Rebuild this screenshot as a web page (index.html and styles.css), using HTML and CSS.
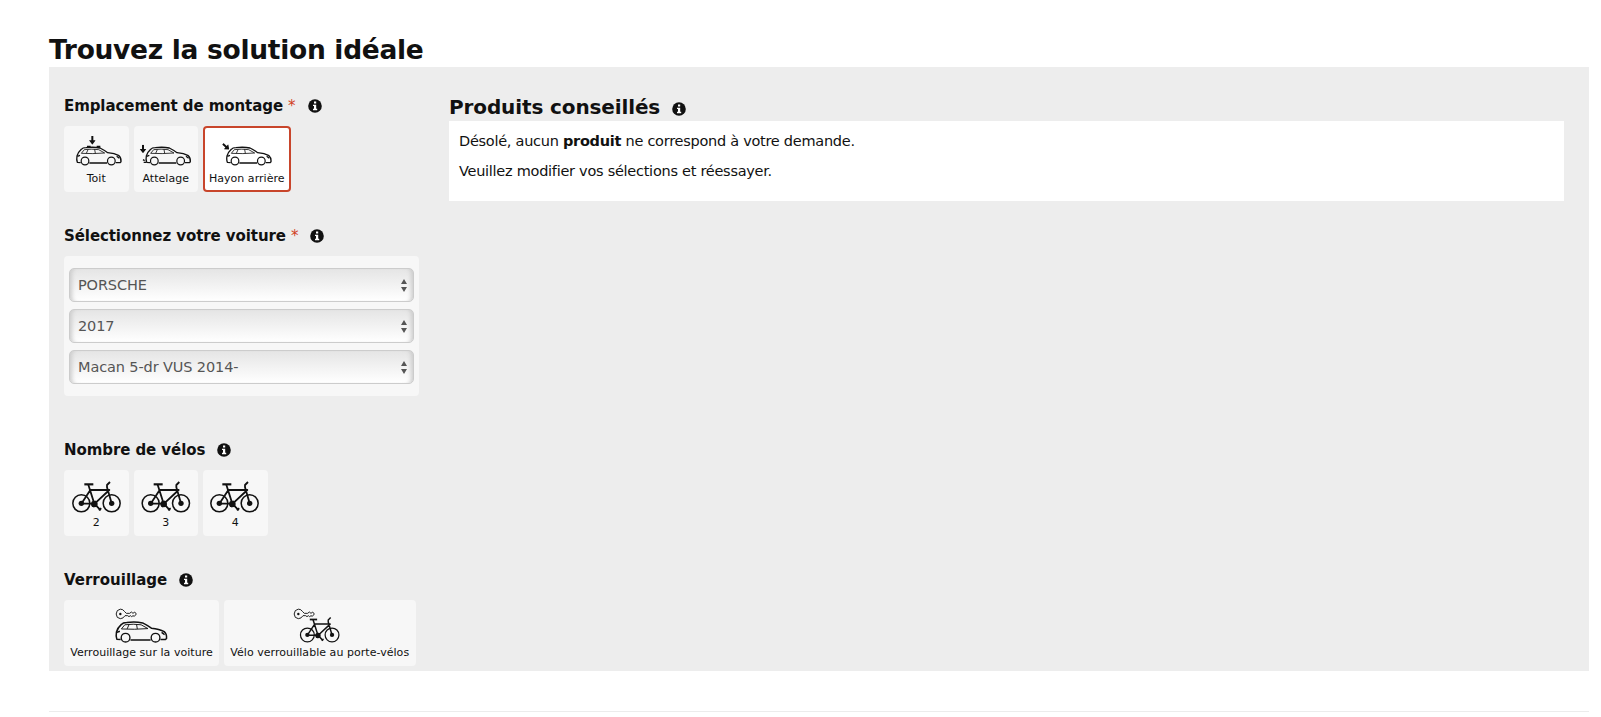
FILE: index.html
```html
<!DOCTYPE html>
<html lang="fr">
<head>
    <meta charset="UTF-8">
    <meta name="viewport" content="width=device-width, initial-scale=1.0">
    <title>Trouvez la solution idéale</title>
    <link rel="stylesheet" href="styles.css">
</head>
<body>
    <!-- Shared icon shapes -->
    <svg class="sprite" aria-hidden="true">
        <symbol id="info" viewBox="0 0 14 14">
            <circle cx="7" cy="7" r="6.8" fill="#111"/>
            <path d="M6 2.5h2.2v2H6zM5 5.7h3.2v4h1v1.5H5V9.7h1V7.1H5z" fill="#fff"/>
        </symbol>
        <symbol id="car" viewBox="0 0 138 58" overflow="visible">
            <g fill="none" stroke="#111" stroke-width="4" stroke-linejoin="round">
                <path d="M14 49L4 48Q1 40 3 29Q6 18 16 9Q20 4 30 4Q52 1 72 5Q84 11 95 19Q116 21 129 28Q136 34 135 46L132 49H119M40 50H93"/>
                <circle cx="27" cy="44" r="11.5" stroke-width="3.6"/>
                <circle cx="106" cy="44" r="11.5" stroke-width="3.6"/>
                <path d="M16 21L25 10Q48 7 68 10L86 20Q50 23 16 21M36 10L31 21M56 9L58 21" stroke-width="2.5"/>
                <path d="M4 30L12 27M122 30L130 36M125 33H129" stroke-width="4"/>
            </g>
        </symbol>
        <symbol id="bike" viewBox="0 0 148 96" overflow="visible">
            <g fill="none" stroke="#111" stroke-width="5.4" stroke-linejoin="round">
                <circle cx="28" cy="65" r="25.5" stroke-width="4.6"/>
                <circle cx="119" cy="65" r="25.5" stroke-width="4.6"/>
                <path d="M37 8H64" stroke-width="6.5"/>
                <path d="M49 9L67 66H28L55 25H112L68 66M119 65L105 17V10L114 1M67 66L86 86M80 85L88 80M62 76L72 58"/>
            </g>
            <circle cx="28" cy="65" r="8" fill="#111"/>
            <circle cx="119" cy="65" r="8" fill="#111"/>
            <circle cx="67" cy="67" r="10" fill="#111"/>
        </symbol>
        <symbol id="key" viewBox="0 0 64 32" overflow="visible">
            <path d="M27 9Q22 1 14 1.500Q2 3 1.500 16Q2 29 14 30Q23 30 28 21H36L40 24L44 21L48 24L52 21L56 23L62 16L57 10L52 14L47 10L42 14H32Z" fill="none" stroke="#111" stroke-width="2.8" stroke-linejoin="round"/>
            <circle cx="14" cy="16" r="3.6" fill="#111"/>
        </symbol>
        <symbol id="arrow" viewBox="0 0 20 26">
            <path d="M7 0h6v13h7L10 26L0 13h7z" fill="#111"/>
        </symbol>
    </svg>

    <h1>Trouvez la solution idéale</h1>

    <div class="configurator">
        <div class="filters">
            <div class="filter">
                <h3><span class="label">Emplacement de montage</span> <span class="required">*</span><svg class="info"><use href="#info"/></svg></h3>
                <div class="options">
                    <button class="option">
                        <svg class="icon" viewBox="0 0 192 132">
                            <use href="#arrow" x="75" y="30" width="20" height="26"/>
                            <path d="M69 62h11M98 62h11" stroke="#111" stroke-width="6"/>
                            <use href="#car" x="36" y="61" width="138" height="58"/>
                        </svg>
                        <span>Toit</span>
                    </button>
                    <button class="option">
                        <svg class="icon" viewBox="0 0 192 132">
                            <use href="#arrow" x="17" y="56" width="20" height="26"/>
                            <use href="#car" x="34" y="61" width="138" height="58"/>
                            <path d="M27 101l5 3M29 109h7" stroke="#111" stroke-width="4"/>
                        </svg>
                        <span>Attelage</span>
                    </button>
                    <button class="option selected">
                        <svg class="icon" viewBox="0 0 192 132">
                            <use href="#arrow" x="-10" y="-25" width="20" height="26" transform="translate(42 70) rotate(-48)"/>
                            <use href="#car" x="33" y="61" width="138" height="58"/>
                        </svg>
                        <span>Hayon arrière</span>
                    </button>
                </div>
            </div>

            <div class="filter">
                <h3><span class="label">Sélectionnez votre voiture</span> <span class="required">*</span><svg class="info"><use href="#info"/></svg></h3>
                <div class="car-select">
                    <div class="select"><span>PORSCHE</span><svg class="caret" viewBox="0 0 6 13"><path d="M3 0l3 5H0zM0 8h6l-3 5z"/></svg></div>
                    <div class="select"><span>2017</span><svg class="caret" viewBox="0 0 6 13"><path d="M3 0l3 5H0zM0 8h6l-3 5z"/></svg></div>
                    <div class="select"><span>Macan 5-dr VUS 2014-</span><svg class="caret" viewBox="0 0 6 13"><path d="M3 0l3 5H0zM0 8h6l-3 5z"/></svg></div>
                </div>
            </div>

            <div class="filter">
                <h3><span class="label">Nombre de vélos</span><svg class="info"><use href="#info"/></svg></h3>
                <div class="options">
                    <button class="option">
                        <svg class="icon" viewBox="0 0 192 132"><use href="#bike" x="24" y="35" width="148" height="96"/></svg>
                        <span>2</span>
                    </button>
                    <button class="option">
                        <svg class="icon" viewBox="0 0 192 132"><use href="#bike" x="22" y="35" width="148" height="96"/></svg>
                        <span>3</span>
                    </button>
                    <button class="option">
                        <svg class="icon" viewBox="0 0 192 132"><use href="#bike" x="21" y="35" width="148" height="96"/></svg>
                        <span>4</span>
                    </button>
                </div>
            </div>

            <div class="filter">
                <h3><span>Verrouillage</span><svg class="info"><use href="#info"/></svg></h3>
                <div class="options">
                    <button class="option lock-car">
                        <svg class="icon" viewBox="0 0 192 132">
                            <use href="#key" x="17" y="26" width="64" height="32"/>
                            <use href="#car" x="14" y="63" width="161" height="66"/>
                        </svg>
                        <span>Verrouillage sur la voiture</span>
                    </button>
                    <button class="option lock-bike">
                        <svg class="icon" viewBox="0 0 192 132">
                            <use href="#key" x="17" y="26" width="64" height="32"/>
                            <use href="#bike" x="35" y="52" width="121" height="78"/>
                        </svg>
                        <span>Vélo verrouillable au porte-vélos</span>
                    </button>
                </div>
            </div>
        </div>

        <div class="results">
            <h2><span>Produits conseillés</span><svg class="info"><use href="#info"/></svg></h2>
            <div class="message">
                <p>Désolé, aucun <strong>produit</strong> ne correspond à votre demande.</p>
                <p>Veuillez modifier vos sélections et réessayer.</p>
            </div>
        </div>
    </div>

    <hr>
</body>
</html>
```
FILE: styles.css
```css
* {
    box-sizing: border-box;
}
body {
    margin: 0;
    padding: 0 12px 0 49px;
    font-family: Verdana, "DejaVu Sans", sans-serif;
    color: #111;
    background: #fff;
    overflow: hidden;
}
.sprite {
    display: none;
}
h1 {
    margin: 0;
    height: 67px;
    padding-top: 34px;
    font-size: 26.5px;
    line-height: 32px;
    letter-spacing: -0.3px;
    white-space: nowrap;
}
.configurator {
    display: flex;
    height: 604px;
    background: #ededed;
    padding: 23px 25px 0 15px;
}
.filters {
    width: 355px;
    margin-right: 30px;
    flex-shrink: 0;
}
.filter {
    margin-bottom: 28px;
}
.filter:nth-child(2) {
    margin-bottom: 38px;
}
h3 {
    display: flex;
    align-items: center;
    margin: 0;
    height: 36px;
    padding-bottom: 4px;
    font-size: 15px;
    line-height: 32px;
    white-space: nowrap;
}
.label {
    letter-spacing: -0.08px;
}
.required {
    margin-left: 5px;
    color: #d14124;
    font-weight: normal;
}
.info {
    width: 14px;
    height: 14px;
    margin-left: 12px;
}
.options {
    display: flex;
    gap: 5px;
}
.option {
    display: flex;
    flex-direction: column;
    align-items: center;
    width: 64.5px;
    height: 66px;
    padding: 0;
    border: 0;
    border-radius: 4px;
    background: #f7f7f7;
    color: #111;
    font-family: inherit;
    font-size: 11px;
    line-height: 18px;
    letter-spacing: 0.04px;
    white-space: nowrap;
}
.option.selected {
    width: 87.5px;
    background: #fff;
    box-shadow: inset 0 0 0 2px #c8452b;
}
.lock-car {
    width: 155px;
}
.lock-bike {
    width: 191.5px;
}
.icon {
    width: 64px;
    height: 44px;
    flex-shrink: 0;
}
.car-select {
    display: flex;
    flex-direction: column;
    gap: 7px;
    height: 140px;
    padding: 12px 5px;
    border-radius: 4px;
    background: #f7f7f7;
}
.select {
    display: flex;
    align-items: center;
    justify-content: space-between;
    height: 34px;
    padding: 0 6px 0 8px;
    border: 1px solid #ccc;
    border-radius: 5px;
    background: linear-gradient(#e5e5e5, #fff);
    box-shadow: inset 5px 0 4px -3px #ccc, inset -5px 0 4px -3px #ccc;
    color: #555;
    font-size: 14.5px;
    letter-spacing: -0.12px;
}
.caret {
    width: 6px;
    height: 13px;
    fill: #555;
}
.results {
    flex: 1;
}
h2 {
    display: flex;
    align-items: center;
    margin: 0;
    height: 31px;
    padding-top: 3px;
    font-size: 20px;
    line-height: 28px;
    letter-spacing: -0.12px;
    white-space: nowrap;
}
h2 .info {
    margin-top: 4px;
}
.message {
    height: 80px;
    padding: 5px 10px;
    background: #fff;
    font-size: 14.5px;
    line-height: 30px;
    letter-spacing: -0.27px;
}
.message p {
    margin: 0;
}
hr {
    height: 1px;
    margin: 40px 0 0;
    border: 0;
    background: #ececec;
}
```
